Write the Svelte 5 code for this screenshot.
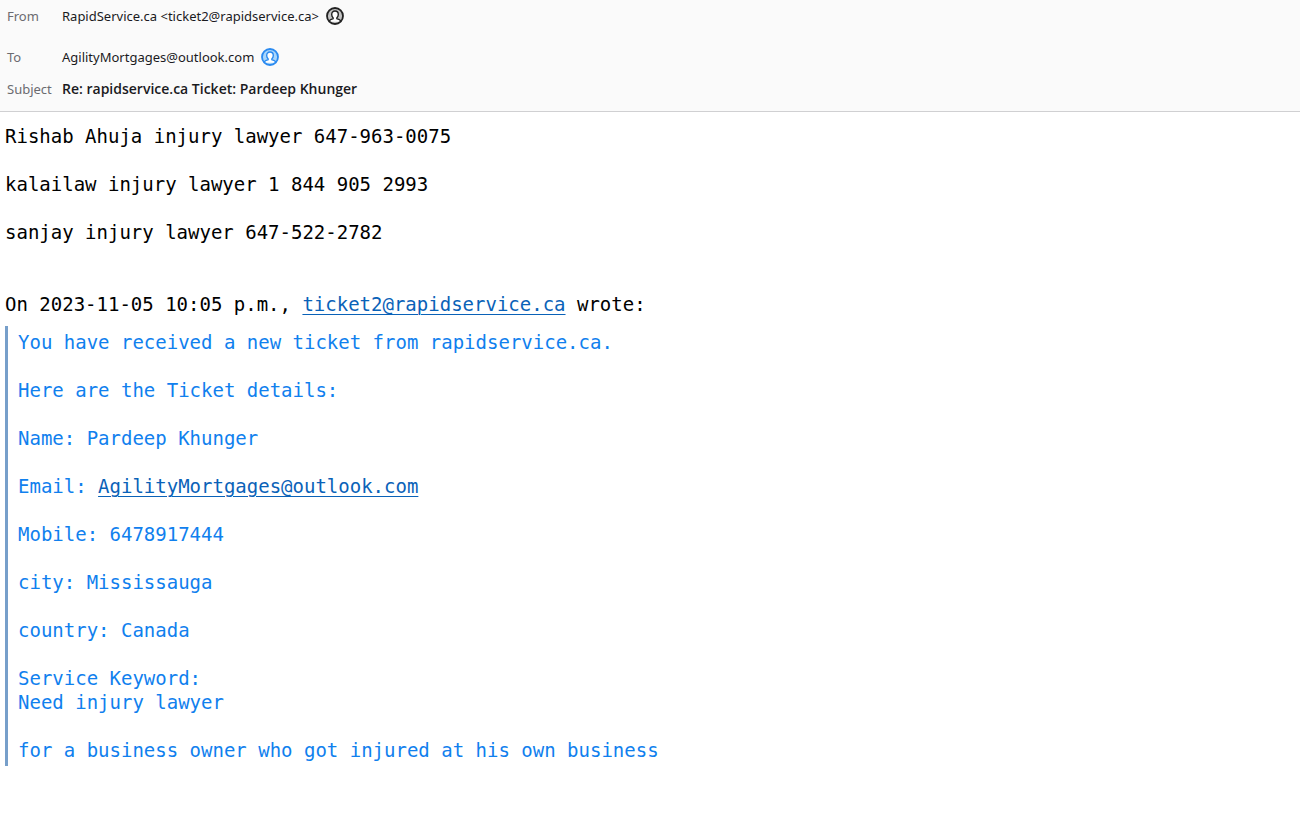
<script>
	const contacts = [
		'Rishab Ahuja injury lawyer 647-963-0075',
		'kalailaw injury lawyer 1 844 905 2993',
		'sanjay injury lawyer 647-522-2782'
	];

	const details = [
		{ label: 'Name', value: 'Pardeep Khunger' },
		{ label: 'Email', value: 'AgilityMortgages@outlook.com', mail: true },
		{ label: 'Mobile', value: '6478917444' },
		{ label: 'city', value: 'Mississauga' },
		{ label: 'country', value: 'Canada' }
	];
</script>

{#snippet avatar()}
	<svg class="avatar" viewBox="0 0 18 18" aria-hidden="true">
		<circle class="disc" cx="9" cy="9" r="8" />
		<path
			class="person"
			d="M3.2 14.8c.2-1.900 1.500-2.500 3.600-2.900.5-.2.5-.8.2-1.200C6.200 9.800 5.700 8.800 5.700 7.400 5.700 5.200 7 4 9 4s3.300 1.200 3.300 3.400c0 1.400-.5 2.400-1.300 3.300-.3.4-.3 1 .2 1.200 2.100.4 3.400 1 3.600 2.900"
		/>
		<circle class="ring" cx="9" cy="9" r="8" />
	</svg>
{/snippet}

<header class="headers">
	<div class="row">
		<span class="label">From</span>
		<span class="value">RapidService.ca &lt;ticket2@rapidservice.ca&gt;</span>
		<span class="icon">{@render avatar()}</span>
	</div>
	<div class="row to">
		<span class="label">To</span>
		<span class="value">AgilityMortgages@outlook.com</span>
		<span class="icon known">{@render avatar()}</span>
	</div>
	<div class="row">
		<span class="label">Subject</span>
		<h1 class="value subject">Re: rapidservice.ca Ticket: Pardeep Khunger</h1>
	</div>
</header>

<main class="message">
	{#each contacts as contact}
		<p>{contact}</p>
	{/each}

	<p class="cite">
		On 2023-11-05 10:05 p.m.,
		<a href="mailto:ticket2@rapidservice.ca">ticket2@rapidservice.ca</a> wrote:
	</p>

	<blockquote>
		<p>You have received a new ticket from rapidservice.ca.</p>
		<p>Here are the Ticket details:</p>
		{#each details as { label, value, mail }}
			<p>
				{label}:
				{#if mail}<a href="mailto:{value}">{value}</a>{:else}{value}{/if}
			</p>
		{/each}
		<p>Service Keyword:<br />Need injury lawyer</p>
		<p>for a business owner who got injured at his own business</p>
	</blockquote>
</main>

<style>
	:global(body) {
		margin: 0;
		background: #fff;
	}

	.headers {
		padding: 0 7px 6px;
		background: #fafafa;
		border-bottom: 1px solid #d0d0d2;
		font-family: 'Noto Sans', 'Open Sans', sans-serif;
		font-size: 13px;
		line-height: 24px;
		color: #1a1a1e;
	}

	.row {
		display: flex;
		align-items: center;
		min-height: 32px;
	}

	.to {
		margin-top: 9px;
	}

	.label {
		flex: none;
		width: 55px;
		color: #6b6b70;
	}

	.subject {
		margin: 0;
		font-family: 'Open Sans', sans-serif;
		font-size: 14px;
		font-weight: 600;
	}

	.icon {
		display: flex;
		margin-left: 7px;
		color: #222;
		--disc: #c4c4c4;
	}

	.icon.known {
		color: #2a8af0;
		--disc: #a9d6fb;
	}

	.avatar {
		width: 18px;
		height: 18px;
	}

	.disc {
		fill: var(--disc);
	}

	.person {
		fill: #fff;
		stroke: currentColor;
		stroke-width: 1.4;
	}

	.ring {
		fill: none;
		stroke: currentColor;
		stroke-width: 1.8;
	}

	.message {
		padding: 12px 5px;
		font-family: 'DejaVu Sans Mono', monospace;
		font-size: 19px;
		line-height: 24px;
		color: #000;
	}

	p {
		margin: 0 0 24px;
	}

	.cite {
		margin: 48px 0 10px;
	}

	a {
		color: #0a62b8;
		text-decoration-thickness: 1px;
		text-underline-offset: 3px;
	}

	blockquote {
		margin: 0;
		padding: 4px 0 4px 10px;
		border-left: 3px solid #779fca;
		color: #1080ee;
	}

	blockquote p:last-child {
		margin-bottom: 0;
	}
</style>
